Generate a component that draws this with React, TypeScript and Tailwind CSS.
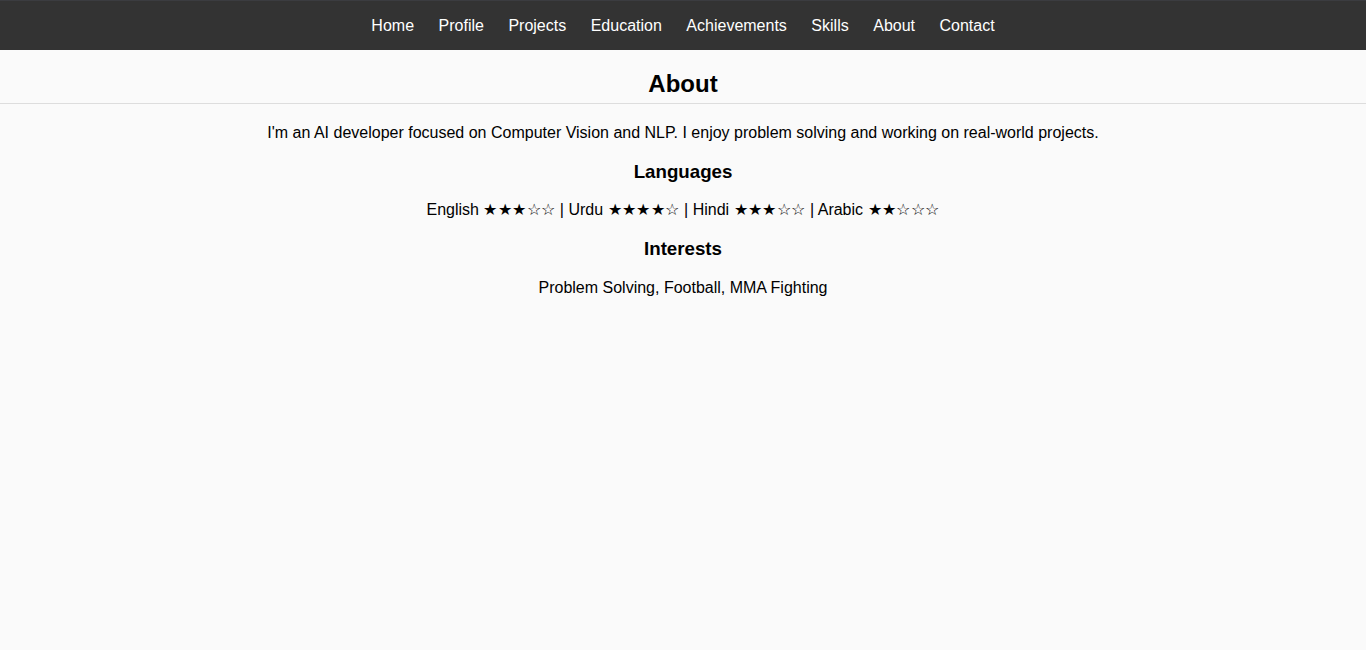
export default function App() {
  const nav = ["Home", "Profile", "Projects", "Education", "Achievements", "Skills", "About", "Contact"];
  return (
    <div className="min-h-screen bg-[#fafafa] text-black font-['Liberation_Sans',Arial,sans-serif]">
      <nav className="h-[50px] bg-[#333] border-t border-[#3b3c40] flex items-center justify-center gap-[24.5px]">
        {nav.map((n) => (
          <a key={n} href="#" className="text-white text-base">
            {n}
          </a>
        ))}
      </nav>
      <section className="text-center">
        <h2 className="mt-[20px] pb-[5px] border-b border-[#ddd] text-2xl font-bold leading-[28px]">About</h2>
        <p className="mt-[19.5px] text-base leading-[18.4px]">
          I'm an AI developer focused on Computer Vision and NLP. I enjoy problem solving and working on real-world projects.
        </p>
        <h3 className="mt-[18.72px] text-[18.72px] font-bold leading-[22px]">Languages</h3>
        <p className="mt-[18.72px] text-base leading-[18.4px]">
          English <span className="tracking-[0.4px]">★★★☆☆</span> | Urdu <span className="tracking-[0.4px]">★★★★☆</span> | Hindi{" "}
          <span className="tracking-[0.4px]">★★★☆☆</span> | Arabic <span className="tracking-[0.4px]">★★☆☆☆</span>
        </p>
        <h3 className="mt-[18.72px] text-[18.72px] font-bold leading-[22px]">Interests</h3>
        <p className="mt-[18.72px] text-base leading-[18.4px]">Problem Solving, Football, MMA Fighting</p>
      </section>
    </div>
  );
}
